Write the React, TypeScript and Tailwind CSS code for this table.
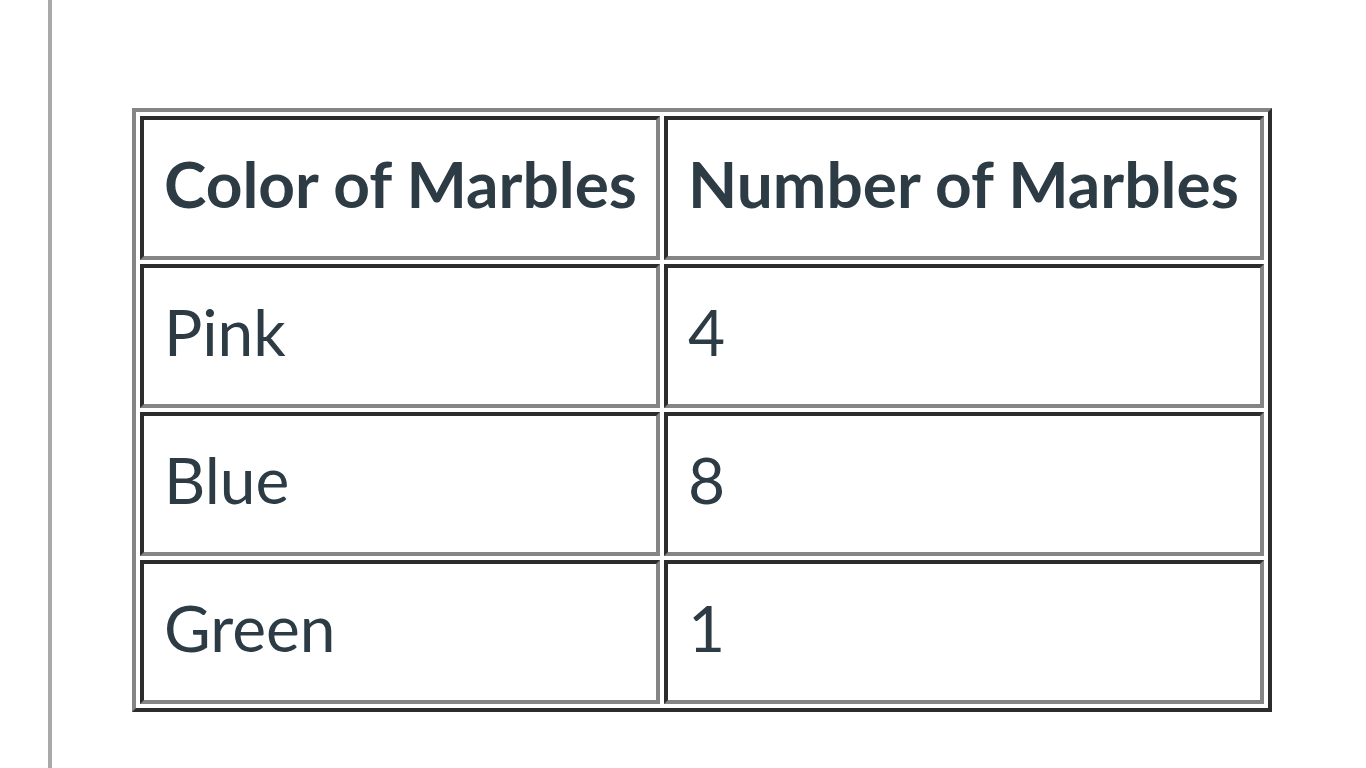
export default function App() {
  const rows = [
    ["Pink", "4"],
    ["Blue", "8"],
    ["Green", "1"],
  ];
  const cell =
    "h-[144px] border-[4px] border-solid border-t-[#2c2c2c] border-l-[#2c2c2c] border-r-[#858585] border-b-[#858585] pl-[20px] pr-0 pb-[8px] pt-0 align-middle text-left";
  return (
    <div className="flex min-h-[768px] w-full bg-white font-['Lato',sans-serif] text-[#2d3b45]">
      <div className="ml-12 w-1 shrink-0 bg-[#a9a9a9]" />
      <div className="ml-20 pt-[108px]">
        <table className="w-[1140px] table-fixed border-separate border-spacing-[4px] border-[4px] border-solid border-t-[#858585] border-l-[#858585] border-r-[#2c2c2c] border-b-[#2c2c2c]">
          <colgroup>
            <col className="w-[520px]" />
            <col className="w-[600px]" />
          </colgroup>
          <thead>
            <tr>
              <th className={`${cell} text-[64px] font-bold leading-none`}>Color of Marbles</th>
              <th className={`${cell} text-[64px] font-bold leading-none`}>Number of Marbles</th>
            </tr>
          </thead>
          <tbody>
            {rows.map(([c, n]) => (
              <tr key={c}>
                <td className={`${cell} text-[64px] leading-none`}>{c}</td>
                <td className={`${cell} text-[64px] leading-none`}>{n}</td>
              </tr>
            ))}
          </tbody>
        </table>
      </div>
    </div>
  );
}
